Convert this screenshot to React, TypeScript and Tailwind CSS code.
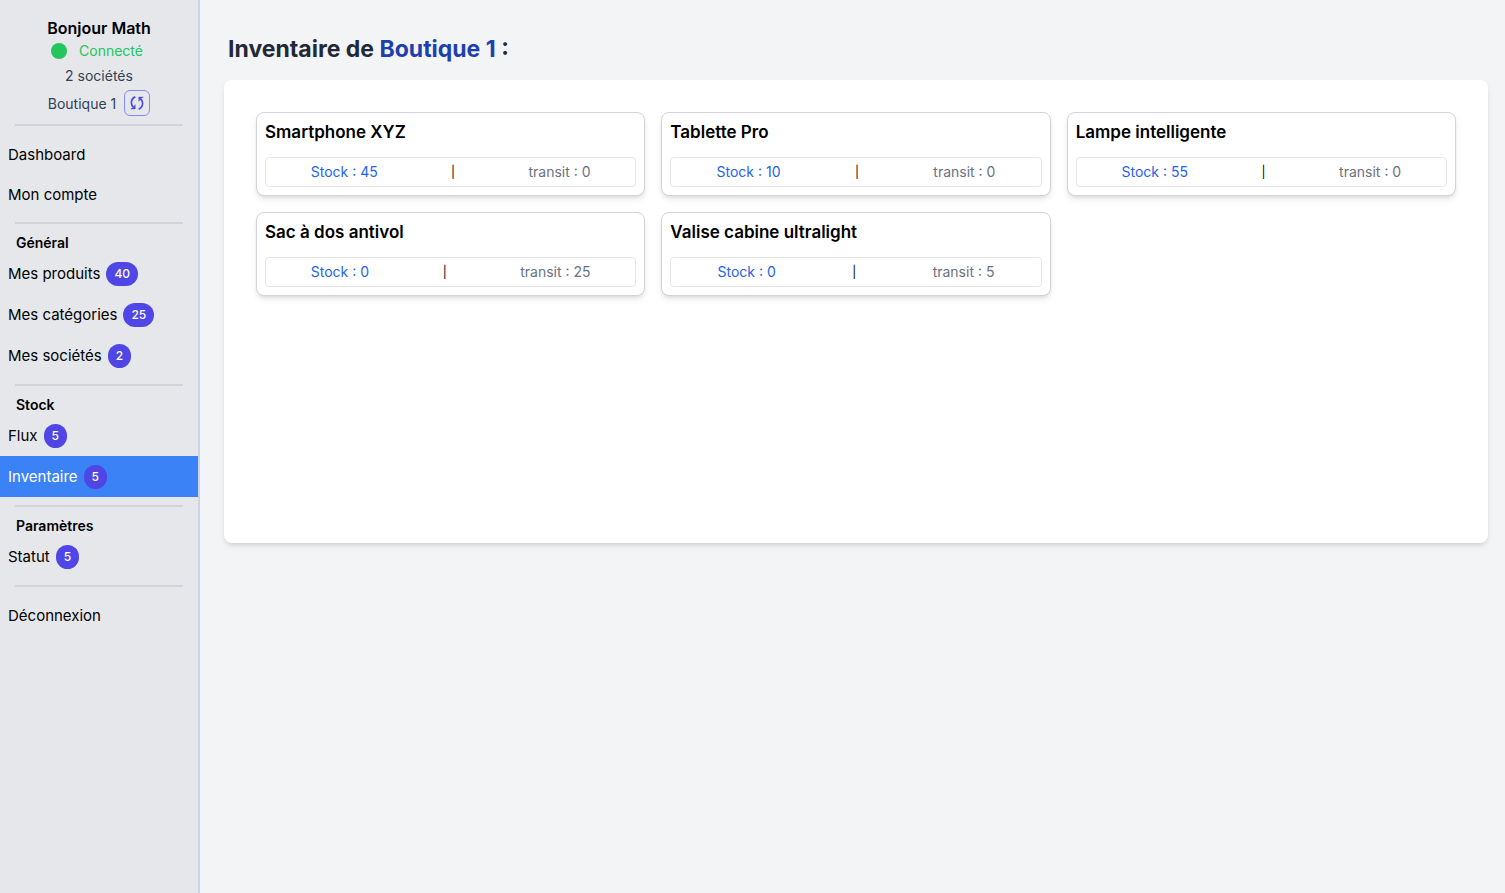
import type { ReactNode } from "react";

type Product = { name: string; stock: number; transit: number };

const products: Product[] = [
  { name: "Smartphone XYZ", stock: 45, transit: 0 },
  { name: "Tablette Pro", stock: 10, transit: 0 },
  { name: "Lampe intelligente", stock: 55, transit: 0 },
  { name: "Sac à dos antivol", stock: 0, transit: 25 },
  { name: "Valise cabine ultralight", stock: 0, transit: 5 },
];

function Separator() {
  return <hr className="mx-auto my-2 w-[85%] border-t-2 border-[#d1d5db]" />;
}

function NavHeading({ children }: { children: ReactNode }) {
  return <h2 className="px-4 text-[14px] leading-[21px] font-semibold">{children}</h2>;
}

function NavItem({ label, count, active = false }: { label: string; count?: number; active?: boolean }) {
  return (
    <a
      href="#"
      aria-current={active ? "page" : undefined}
      className={`flex items-start gap-[6px] px-2 pt-[9px] text-[15px] ${count === undefined ? "h-10" : "h-[41px]"} ${
        active ? "bg-[#3b82f6] text-white" : "text-black"
      }`}
    >
      <span className="leading-6">{label}</span>
      {count !== undefined && (
        <span className="rounded-full bg-[#4f46e5] px-2 text-[12px] leading-6 font-medium text-white">{count}</span>
      )}
    </a>
  );
}

function SwapIcon() {
  return (
    <svg viewBox="0 0 16 16" className="size-4" fill="none" stroke="currentColor" aria-hidden="true">
      <path strokeWidth="1.7" d="M6.300 1.900C3.600 3 2.400 5.300 2.400 7.700c0 2 .8 3.600 2.300 4.800" />
      <path fill="currentColor" strokeWidth=".5" d="M6.200 9.700v4.200H1.800l2.600-1.200z" />
      <path strokeWidth="1.7" d="M9.700 14.100c2.700-1.100 3.900-3.400 3.900-5.800 0-2-.8-3.600-2.300-4.800" />
      <path fill="currentColor" strokeWidth=".5" d="M9.800 6.300V2.100h4.400l-2.600 1.200z" />
    </svg>
  );
}

function Sidebar() {
  return (
    <aside className="w-[200px] shrink-0 border-r-2 border-[#cbd5e1] bg-[#e5e7eb]">
      <div className="flex flex-col items-center pt-4 text-[14px] text-[#334155]">
        <p className="text-[16px] leading-6 font-semibold text-black">Bonjour Math</p>
        <p className="flex items-center gap-3 pr-1 leading-[22px] text-[#22c55e]">
          <span className="size-4 rounded-full bg-[#22c55e]" />
          Connecté
        </p>
        <p className="pt-[2px] leading-6">2 sociétés</p>
        <div className="flex items-center gap-2 pt-[2px]">
          <span>Boutique 1</span>
          <button
            type="button"
            aria-label="Changer de société"
            className="flex size-[26px] items-center justify-center rounded-md border border-[#818cf8] text-[#4f46e5]"
          >
            <SwapIcon />
          </button>
        </div>
      </div>
      <Separator />
      <nav>
        <NavItem label="Dashboard" />
        <NavItem label="Mon compte" />
        <Separator />
        <NavHeading>Général</NavHeading>
        <NavItem label="Mes produits" count={40} />
        <NavItem label="Mes catégories" count={25} />
        <NavItem label="Mes sociétés" count={2} />
        <Separator />
        <NavHeading>Stock</NavHeading>
        <NavItem label="Flux" count={5} />
        <NavItem label="Inventaire" count={5} active />
        <Separator />
        <NavHeading>Paramètres</NavHeading>
        <NavItem label="Statut" count={5} />
        <Separator />
        <NavItem label="Déconnexion" />
      </nav>
    </aside>
  );
}

function ProductCard({ name, stock, transit }: Product) {
  return (
    <li className="rounded-lg border border-[#d1d5db] bg-white p-2 shadow-md">
      <h2 className="mb-[14px] text-[17px] leading-[22px] font-semibold">{name}</h2>
      <div className="flex items-center justify-around rounded border border-[#e5e7eb] px-2 py-1 text-[14px] leading-5">
        <span className="text-[#2563eb]">Stock : {stock}</span>
        <span className="text-[12px]">|</span>
        <span className="text-[#6b7280]">transit : {transit}</span>
      </div>
    </li>
  );
}

export default function App() {
  return (
    <div className="flex min-h-screen bg-[#f3f4f6] font-['Inter','Liberation_Sans',sans-serif] text-black antialiased">
      <Sidebar />
      <main className="min-w-0 flex-1 pt-8 pr-[17px] pl-6">
        <h1 className="px-1 text-[23px] leading-[34px] font-bold text-[#1f2937]">
          Inventaire de <span className="text-[#1e40af]">Boutique 1</span> :
        </h1>
        <section className="mt-[14px] min-h-[463px] rounded-lg bg-white p-8 shadow-md">
          <ul className="grid grid-cols-3 gap-4">
            {products.map((product) => (
              <ProductCard key={product.name} {...product} />
            ))}
          </ul>
        </section>
      </main>
    </div>
  );
}
